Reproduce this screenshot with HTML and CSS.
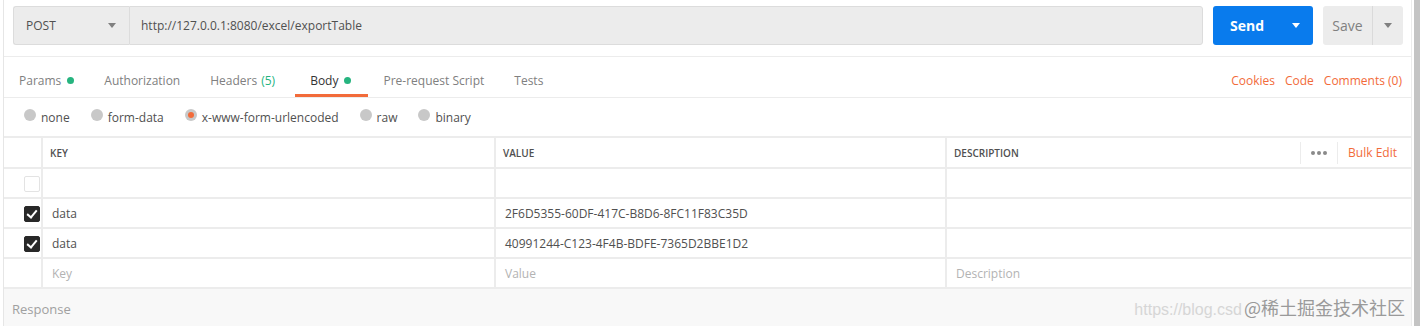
FILE: index.html
```html
<!DOCTYPE html>
<html lang="en">
<head>
    <meta charset="UTF-8">
    <title>Postman - exportTable</title>
    <link rel="stylesheet" href="styles.css">
</head>
<body>
    <div class="app">
        <div class="main">
            <!-- barra de request -->
            <div class="request-bar">
                <div class="method">
                    <span>POST</span>
                    <span class="caret"></span>
                </div>
                <div class="url">http://127.0.0.1:8080/excel/exportTable</div>
                <div class="btn-send">
                    <span>Send</span>
                    <span class="caret caret-white"></span>
                </div>
                <div class="btn-save">
                    <span class="save-label">Save</span>
                    <span class="save-drop"><span class="caret"></span></span>
                </div>
            </div>

            <div class="tabs">
                <div class="tab">Params <span class="dot"></span></div>
                <div class="tab">Authorization</div>
                <div class="tab tab-headers">Headers <span class="count">(5)</span></div>
                <div class="tab active">Body <span class="dot"></span></div>
                <div class="tab">Pre-request Script</div>
                <div class="tab">Tests</div>
                <div class="tab-links">
                    <a href="#">Cookies</a>
                    <a href="#">Code</a>
                    <a href="#">Comments (0)</a>
                </div>
            </div>

            <div class="body-modes">
                <label class="mode"><span class="radio"></span>none</label>
                <label class="mode"><span class="radio"></span>form-data</label>
                <label class="mode"><span class="radio checked"></span>x-www-form-urlencoded</label>
                <label class="mode"><span class="radio"></span>raw</label>
                <label class="mode"><span class="radio"></span>binary</label>
            </div>

            <table class="kv">
                <colgroup>
                    <col class="col-check">
                    <col class="col-key">
                    <col class="col-value">
                    <col>
                </colgroup>
                <thead>
                    <tr>
                        <th></th>
                        <th>Key</th>
                        <th>Value</th>
                        <th>
                            <div class="desc-head">
                                <span>Description</span>
                                <span class="head-tools">
                                    <span class="more"><i></i><i></i><i></i></span>
                                    <a href="#" class="bulk">Bulk Edit</a>
                                </span>
                            </div>
                        </th>
                    </tr>
                </thead>
                <tbody>
                    <tr>
                        <td><span class="check"></span></td>
                        <td></td>
                        <td></td>
                        <td></td>
                    </tr>
                    <tr>
                        <td><span class="check on"></span></td>
                        <td>data</td>
                        <td>2F6D5355-60DF-417C-B8D6-8FC11F83C35D</td>
                        <td></td>
                    </tr>
                    <tr>
                        <td><span class="check on"></span></td>
                        <td>data</td>
                        <td>40991244-C123-4F4B-BDFE-7365D2BBE1D2</td>
                        <td></td>
                    </tr>
                    <tr class="placeholder">
                        <td></td>
                        <td>Key</td>
                        <td>Value</td>
                        <td>Description</td>
                    </tr>
                </tbody>
            </table>

            <div class="response">
                <span>Response</span>
                <span class="watermark"><span class="wm-url">https://blog.csd</span>@稀土掘金技术社区</span>
            </div>
        </div>
        <div class="scrollbar"></div>
    </div>
</body>
</html>
```

FILE: styles.css
```css
body {
    margin: 0;
    padding: 0;
    background-color: #fff;
    font-family: "Open Sans", "Noto Sans", "Noto Sans CJK SC", sans-serif;
    font-size: 12px;
    color: #505050;
}

.app {
    display: flex;
    height: 326px;
    overflow: hidden;
}

.main {
    flex: 1;
    margin-left: 3px;
    border-left: 1px solid #e6e6e6;
    border-right: 1px solid #ececec;
    display: flex;
    flex-direction: column;
}

.main > * {
    flex-shrink: 0;
}

.scrollbar {
    width: 6px;
    margin-left: 2px;
    background-color: #c4c4c4;
}

/* request bar */
.request-bar {
    display: flex;
    padding: 6px 8px 11px 9px;
    border-bottom: 1px solid #ececec;
    height: 39px;
}

.method {
    width: 116px;
    box-sizing: border-box;
    display: flex;
    align-items: center;
    justify-content: space-between;
    padding: 0 13px 0 12px;
    background-color: #ececec;
    border: 1px solid #dcdcdc;
    border-right: none;
    border-radius: 3px 0 0 3px;
    color: #505050;
}

.caret {
    width: 0;
    height: 0;
    border-left: 4px solid transparent;
    border-right: 4px solid transparent;
    border-top: 5px solid #808080;
}

.caret-white {
    border-top-color: #fff;
}

.url {
    flex: 1;
    display: flex;
    align-items: center;
    padding-left: 11px;
    background-color: #ececec;
    border: 1px solid #dcdcdc;
    border-radius: 0 3px 3px 0;
    margin-right: 10px;
    color: #505050;
}

.btn-send {
    width: 100px;
    box-sizing: border-box;
    display: flex;
    align-items: center;
    justify-content: space-between;
    padding: 0 13px 0 17px;
    background-color: #097bed;
    color: #fff;
    font-size: 14px;
    font-weight: bold;
    border-radius: 3px;
    margin-right: 10px;
}

.btn-save {
    width: 80px;
    display: flex;
    background-color: #ececec;
    border-radius: 3px;
    color: #808080;
    font-size: 14px;
}

.save-label {
    width: 49px;
    display: flex;
    align-items: center;
    justify-content: center;
    border-right: 1px solid #dadada;
}

.save-drop {
    flex: 1;
    display: flex;
    align-items: center;
    justify-content: center;
}

/* tabs */
.tabs {
    display: flex;
    height: 40px;
    border-bottom: 1px solid #ececec;
}

.tab {
    position: relative;
    display: flex;
    align-items: center;
    padding: 6px 15px 0 15px;
    color: #808080;
}

.tab-headers {
    margin-right: 5px;
}

.tab.active {
    color: #333;
    padding-right: 17px;
}

.tab.active::after {
    content: "";
    position: absolute;
    left: 0;
    right: 0;
    bottom: 0;
    height: 3px;
    background-color: #f26b3a;
}

.dot {
    width: 7px;
    height: 7px;
    border-radius: 50%;
    background-color: #26b47f;
    margin-left: 6px;
}

.count {
    color: #26b47f;
    margin-left: 4px;
}

.tab-links {
    margin-left: auto;
    display: flex;
    align-items: center;
    gap: 10px;
    padding: 6px 9px 0 0;
}

.tab-links a {
    color: #f26b3a;
    text-decoration: none;
}

/* body modes */
.body-modes {
    display: flex;
    align-items: center;
    height: 38px;
    padding-left: 20px;
    gap: 21px;
}

.mode {
    display: flex;
    align-items: center;
    gap: 5px;
    color: #505050;
}

.radio {
    width: 12px;
    height: 12px;
    border-radius: 50%;
    background-color: #c8c8c8;
    margin-top: -4px;
    display: flex;
    align-items: center;
    justify-content: center;
}

.radio.checked::after {
    content: "";
    width: 6px;
    height: 6px;
    border-radius: 50%;
    background-color: #f26b3a;
}

/* tabela key/value */
.kv {
    width: 100%;
    border-collapse: collapse;
    table-layout: fixed;
    border-top: 2px solid #ececec;
}

.col-check {
    width: 38px;
}

.col-key {
    width: 453px;
}

.col-value {
    width: 451px;
}

.kv th,
.kv td {
    border-bottom: 2px solid #ececec;
    border-left: 2px solid #ececec;
    padding: 0 8px;
    text-align: left;
    height: 28px;
    white-space: nowrap;
}

.kv th:first-child,
.kv td:first-child {
    border-left: none;
    padding: 0;
    text-align: center;
}

.kv th {
    height: 29px;
    font-size: 10px;
    font-weight: 600;
    text-transform: uppercase;
    color: #505050;
    padding-left: 7px;
}

.kv td {
    padding-left: 9px;
}

.desc-head {
    display: flex;
    align-items: center;
    justify-content: space-between;
}

.head-tools {
    display: flex;
    align-items: center;
    height: 22px;
    text-transform: none;
}

.more {
    display: flex;
    align-items: center;
    gap: 2px;
    padding: 0 10px;
    height: 22px;
    border-left: 1px solid #ececec;
    border-right: 1px solid #ececec;
}

.more i {
    width: 4px;
    height: 4px;
    border-radius: 50%;
    background-color: #8a8a8a;
}

.bulk {
    color: #f26b3a;
    text-decoration: none;
    font-size: 12px;
    font-weight: normal;
    padding-left: 10px;
    padding-right: 6px;
}

.check {
    display: inline-block;
    width: 16px;
    height: 16px;
    box-sizing: border-box;
    border: 1px solid #e3e3e3;
    border-radius: 2px;
    background-color: #fff;
    vertical-align: middle;
    margin-left: 18px;
    position: relative;
}

.check.on {
    background-color: #282828;
    border-color: #282828;
}

.check.on::after {
    content: "";
    position: absolute;
    left: 4px;
    top: 1px;
    width: 4px;
    height: 8px;
    border-right: 2px solid #fff;
    border-bottom: 2px solid #fff;
    transform: rotate(40deg);
}

.placeholder td {
    color: #b3b3b3;
}

/* response */
.response {
    flex: 1 1 auto;
    min-height: 0;
    position: relative;
    background-color: #f8f8f8;
    padding: 11px 8px 0 8px;
    font-size: 13px;
    color: #a0a0a0;
}

.watermark {
    position: absolute;
    right: 6px;
    top: 5px;
    font-size: 18px;
    color: #9a9a9a;
    font-family: "Noto Sans CJK SC", sans-serif;
    white-space: nowrap;
}

.wm-url {
    font-family: "Liberation Sans", sans-serif;
    color: #d6d6d6;
    font-size: 16px;
    margin-right: 2px;
}
```
